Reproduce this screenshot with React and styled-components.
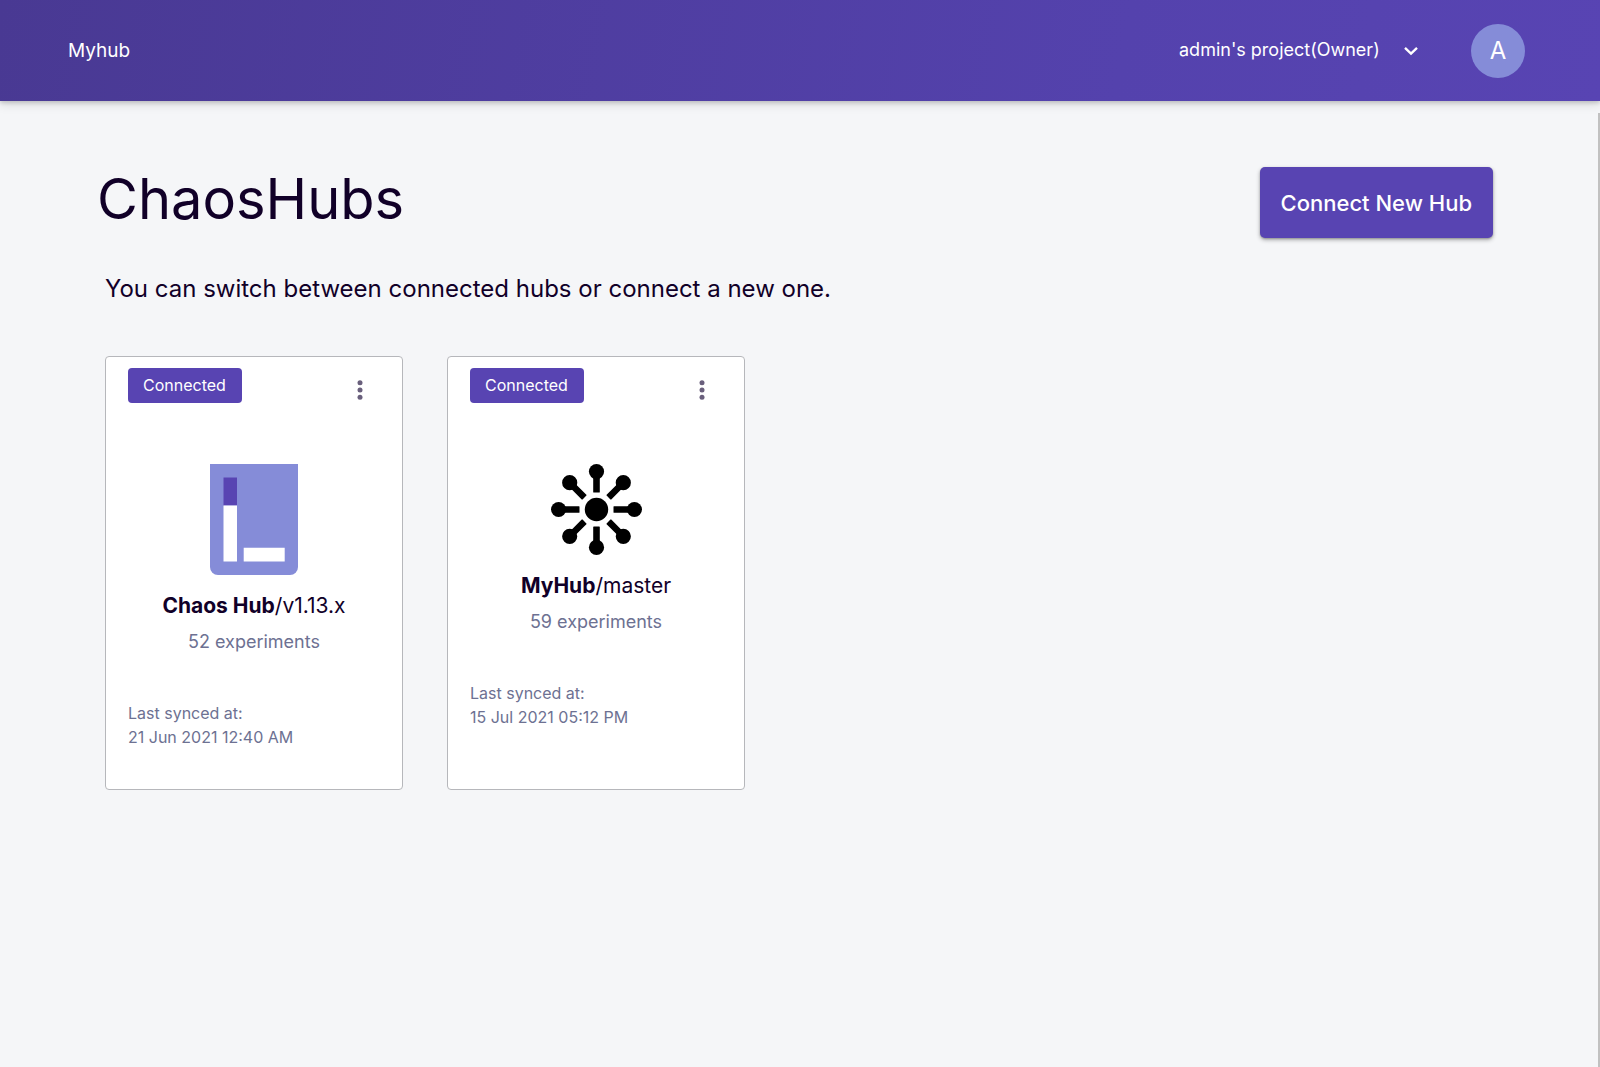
import React from "react";
import styled, { createGlobalStyle } from "styled-components";

const GlobalStyle = createGlobalStyle`
  *, *::before, *::after { box-sizing: border-box; }
  html { height: 100%; }
  body {
    margin: 0;
    min-height: 100%;
    background: #f5f6f8;
    color: #110028;
    font-family: Inter, "Liberation Sans", sans-serif;
  }
  h1, h2, p { margin: 0; font-weight: 400; }
  button, select { font: inherit; cursor: pointer; }
`;

const Page = styled.div`
  display: flex;
  flex-direction: column;
  min-height: 100vh;
`;

const Header = styled.header`
  display: flex;
  align-items: center;
  height: 101px;
  padding: 0 75px 0 68px;
  background: linear-gradient(100deg, #493993 0%, #5442ad 70%, #5844b3 100%);
  box-shadow: 0 2px 4px rgba(0, 0, 0, 0.16), 0 4px 10px rgba(0, 0, 0, 0.1);
  color: #ffffff;
`;

const Brand = styled.a`
  margin-right: auto;
  color: inherit;
  font-size: 19px;
  line-height: 24px;
  text-decoration: none;
`;

const ProjectPicker = styled.div`
  display: grid;
  align-items: center;
  margin-right: 53px;

  & > * { grid-area: 1 / 1; }

  svg {
    justify-self: end;
    pointer-events: none;
  }
`;

const ProjectSelect = styled.select`
  appearance: none;
  padding: 0 38px 2px 0;
  border: 0;
  background: transparent;
  color: inherit;
  font-size: 18px;
  line-height: 24px;

  option { color: #110028; }
`;

const Avatar = styled.button`
  width: 54px;
  height: 54px;
  padding: 0;
  border: 0;
  border-radius: 50%;
  background: #858cd8;
  color: #ffffff;
  font-size: 24px;
  line-height: 32px;
`;

const Main = styled.main`
  flex: 1;
  margin-top: 12px;
  padding: 54px 105px 48px 105px;
  border-right: 2px solid #c1c1c1;
`;

const TitleRow = styled.div`
  display: flex;
  align-items: flex-start;
  justify-content: space-between;
  margin-left: -8px;
`;

const Title = styled.h1`
  font-size: 56px;
  line-height: 64px;
`;

const ConnectButton = styled.button`
  height: 71px;
  padding: 0 21px;
  border: 0;
  border-radius: 5px;
  background: #5844b2;
  box-shadow: 0 2px 4px rgba(0, 0, 0, 0.3), 0 1px 2px rgba(0, 0, 0, 0.2);
  color: #ffffff;
  font-size: 22px;
  font-weight: 500;
  line-height: 32px;
`;

const Intro = styled.p`
  margin-top: 35px;
  font-size: 24px;
  line-height: 32px;
`;

const HubGrid = styled.section`
  display: flex;
  flex-wrap: wrap;
  gap: 44px;
  margin-top: 51px;
`;

const Card = styled.article`
  display: flex;
  flex-direction: column;
  width: 298px;
  min-height: 434px;
  padding: 11px 22px;
  border: 1px solid #b6b7bb;
  border-radius: 4px;
  background: #ffffff;
`;

const CardTop = styled.div`
  display: flex;
  align-items: flex-start;
  justify-content: space-between;
`;

const Badge = styled.span`
  padding: 5px 16px 6px 15px;
  border-radius: 4px;
  background: #5844b2;
  color: #ffffff;
  font-size: 16px;
  line-height: 24px;
`;

const MenuButton = styled.button`
  display: grid;
  place-items: center;
  width: 40px;
  height: 44px;
  padding: 0;
  border: 0;
  background: transparent;
`;

const Summary = styled.div`
  display: flex;
  flex-direction: column;
  align-items: center;
  margin-top: 52px;
`;

const HubName = styled.h2`
  margin-top: 17px;
  font-size: 21px;
  line-height: 28px;
`;

const Count = styled.p`
  margin-top: 10px;
  color: #6d7192;
  font-size: 18px;
  line-height: 24px;
`;

const Synced = styled.p`
  display: flex;
  flex-direction: column;
  margin-top: 47px;
  color: #6d7192;
  font-size: 16px;
  line-height: 24px;
`;

const Chevron = () => (
  <svg width="14" height="10" viewBox="0 0 14 10" fill="none" aria-hidden="true">
    <path d="M1 1.800l6 5.700L13 1.800" stroke="#fff" strokeWidth="2.4" />
  </svg>
);

const Dots = () => (
  <svg width="6" height="20" viewBox="0 0 6 20" fill="#695f7c" aria-hidden="true">
    <circle cx="3" cy="2.7" r="2.500" />
    <circle cx="3" cy="10" r="2.500" />
    <circle cx="3" cy="17.3" r="2.500" />
  </svg>
);

const BookLogo = () => (
  <svg width="88" height="111" viewBox="0 0 88 111" aria-hidden="true">
    <path d="M0 0h88v103a8 8 0 0 1-8 8H8a8 8 0 0 1-8-8z" fill="#858cd8" />
    <path d="M13.5 13.5H27v28H13.5z" fill="#5844b2" />
    <path d="M13.5 41.5H27V97.500H13.5zM33.700 83.700h41v13.800h-41z" fill="#fff" />
  </svg>
);

const HubLogo = () => (
  <svg width="91" height="91" viewBox="-45.500 -45.500 91 91" aria-hidden="true">
    <circle r="11.700" />
    {[0, 45, 90, 135, 180, 225, 270, 315].map((angle) => (
      <g key={angle} transform={`rotate(${angle})`}>
        <circle cy="-37.900" r="7.600" />
        <rect x="-3.300" y="-36" width="6.600" height="19" rx="0.600" />
      </g>
    ))}
  </svg>
);

const hubs = [
  { name: "Chaos Hub", branch: "v1.13.x", count: 52, synced: "21 Jun 2021 12:40 AM", Logo: BookLogo },
  { name: "MyHub", branch: "master", count: 59, synced: "15 Jul 2021 05:12 PM", Logo: HubLogo },
];

function HubCard({ name, branch, count, synced, Logo }) {
  return (
    <Card>
      <CardTop>
        <Badge>Connected</Badge>
        <MenuButton type="button" aria-label={`${name} options`}>
          <Dots />
        </MenuButton>
      </CardTop>
      <Summary>
        <Logo />
        <HubName>
          <strong>{name}</strong>/{branch}
        </HubName>
        <Count>{count} experiments</Count>
      </Summary>
      <Synced>
        <span>Last synced at:</span>
        <time>{synced}</time>
      </Synced>
    </Card>
  );
}

export default function App() {
  return (
    <>
      <GlobalStyle />
      <Page>
        <Header>
          <Brand href="#myhub">Myhub</Brand>
          <ProjectPicker>
            <ProjectSelect aria-label="Project" defaultValue="admin">
              <option value="admin">admin's project(Owner)</option>
            </ProjectSelect>
            <Chevron />
          </ProjectPicker>
          <Avatar type="button" aria-label="Account">A</Avatar>
        </Header>
        <Main>
          <TitleRow>
            <Title>ChaosHubs</Title>
            <ConnectButton type="button">Connect New Hub</ConnectButton>
          </TitleRow>
          <Intro>You can switch between connected hubs or connect a new one.</Intro>
          <HubGrid aria-label="Connected hubs">
            {hubs.map((hub) => (
              <HubCard key={hub.name} {...hub} />
            ))}
          </HubGrid>
        </Main>
      </Page>
    </>
  );
}
